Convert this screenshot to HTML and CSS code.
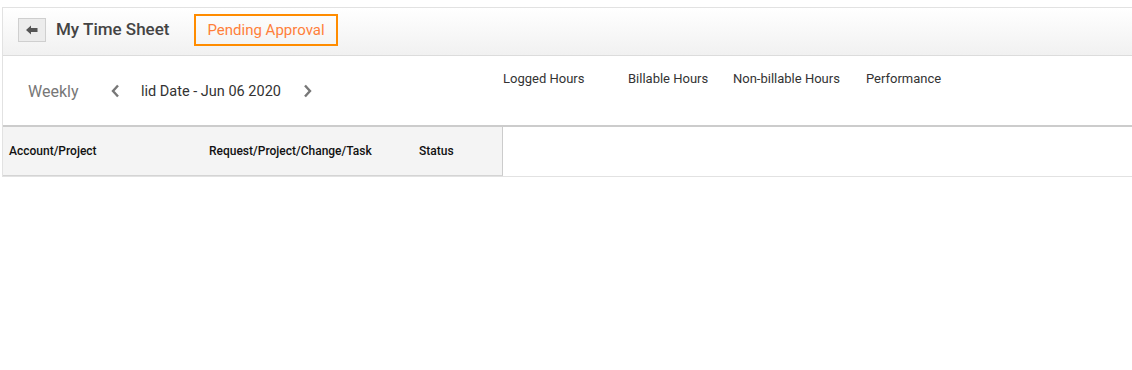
FILE: index.html
```html
<!DOCTYPE html>
<html lang="en">
<head>
<meta charset="UTF-8">
<title>My Time Sheet</title>
<link rel="stylesheet" href="styles.css">
</head>
<body>
<div class="sheet">
  <header class="topbar">
    <button class="back" type="button">
      <svg width="12" height="10" viewBox="0 0 12 10"><path d="M0 5 L5 0.5 V3 H11.5 V7 H5 V9.5 Z" fill="#555"/></svg>
    </button>
    <h1>My Time Sheet</h1>
    <span class="state">Pending Approval</span>
  </header>
  <div class="period">
    <div class="nav">
      <span class="mode">Weekly</span>
      <span class="arrow">
        <svg width="10" height="14" viewBox="0 0 10 14"><path d="M8 1.5 L3 7 L8 12.5" fill="none" stroke="#777" stroke-width="2.4"/></svg>
      </span>
      <span class="date">lid Date - Jun 06 2020</span>
      <span class="arrow">
        <svg width="10" height="14" viewBox="0 0 10 14"><path d="M2 1.5 L7 7 L2 12.5" fill="none" stroke="#777" stroke-width="2.4"/></svg>
      </span>
    </div>
    <ul class="stats">
      <li class="s1">Logged Hours</li>
      <li class="s2">Billable Hours</li>
      <li class="s3">Non-billable Hours</li>
      <li>Performance</li>
    </ul>
  </div>
  <div class="grid">
    <div class="cols">
      <span class="c1">Account/Project</span>
      <span class="c2">Request/Project/Change/Task</span>
      <span>Status</span>
    </div>
  </div>
</div>
</body>
</html>
```
FILE: styles.css
```css
body{margin:0;font-family:Roboto,"Liberation Sans",Arial,sans-serif;color:#333;background:#fff;}
.sheet{margin:7px 0 0 2px;border-top:1px solid #e2e2e2;border-left:1px solid #e2e2e2;}
.topbar{height:47px;display:flex;align-items:flex-start;border-bottom:1px solid #dcdcdc;background:linear-gradient(#fff,#f1f1f1);padding-left:15px;}
.back{width:28px;height:24px;margin:10px 0 0 0;padding:0;border:1px solid #cfcfcf;background:#ececec;display:flex;align-items:center;justify-content:center;cursor:pointer;}
.topbar h1{margin:10px 0 0 10px;font-size:17px;line-height:22px;font-weight:500;color:#444;}
.state{margin:6px 0 0 25px;height:28px;line-height:28px;padding:0 11px;border:2px solid #ff8c00;color:#ff7f3a;font-size:15px;}
.period{height:69px;display:flex;border-bottom:2px solid #cccccc;}
.nav{width:500px;display:flex;align-items:center;padding-top:1px;}
.mode{margin-left:25px;font-size:16px;color:#777;width:82px;}
.arrow{display:flex;width:31px;}
.date{font-size:14.5px;color:#333;width:162px;}
.stats{list-style:none;margin:0;padding:15px 0 0 0;display:flex;font-size:13px;color:#333;}
.stats .s1{width:125px;}
.stats .s2{width:105px;}
.stats .s3{width:133px;}
.grid{border-bottom:1px solid #e2e2e2;}
.cols{width:493px;height:48px;display:flex;align-items:center;background:#f4f4f4;border-right:1px solid #cccccc;border-bottom:1px solid #d4d4d4;font-size:12px;font-weight:500;color:#111;padding-left:6px;}
.cols .c1{width:200px;}
.cols .c2{width:210px;}
```
